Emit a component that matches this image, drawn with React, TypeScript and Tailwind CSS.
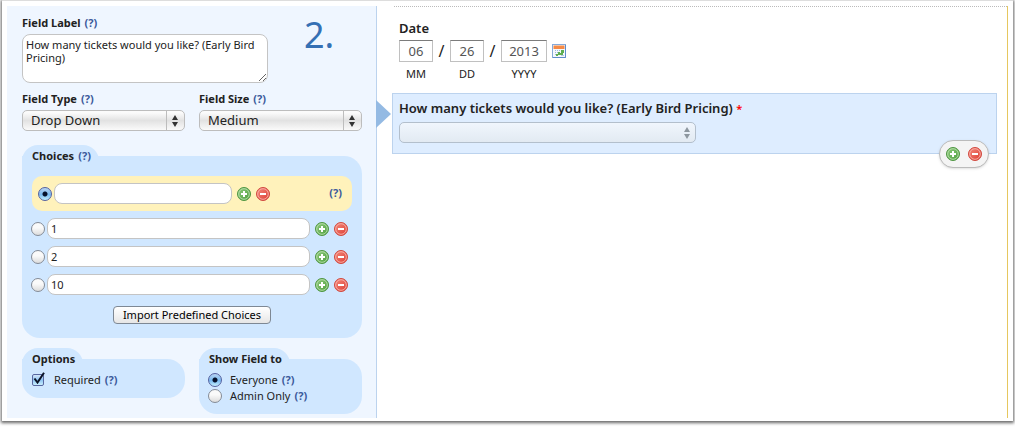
import { useState } from 'react';
import type { ReactNode } from 'react';

const choices = [
  { id: 'choice-1', value: '1' },
  { id: 'choice-2', value: '2' },
  { id: 'choice-10', value: '10' },
];

const dateParts = [
  { id: 'month', value: '06', hint: 'MM', width: 'w-[34px]' },
  { id: 'day', value: '26', hint: 'DD', width: 'w-[34px]' },
  { id: 'year', value: '2013', hint: 'YYYY', width: 'w-[46px]' },
];

function Help() {
  return (
    <a href="#help" className="font-bold text-[#3b5a9b]">
      (?)
    </a>
  );
}

function AddIcon() {
  return (
    <svg width="14" height="14" viewBox="0 0 14 14" aria-hidden="true">
      <defs>
        <linearGradient id="addFill" x1="0" y1="0" x2="1" y2="1">
          <stop offset="0" stopColor="#92cb80" />
          <stop offset="1" stopColor="#4b9e3a" />
        </linearGradient>
      </defs>
      <circle cx="7" cy="7" r="6.5" fill="url(#addFill)" stroke="#4f9642" />
      <circle cx="7" cy="7" r="5.3" fill="none" stroke="#b9dfae" strokeWidth="0.9" />
      <path d="M6 4h2v2h2v2H8v2H6V8H4V6h2z" fill="#fff" />
    </svg>
  );
}

function RemoveIcon() {
  return (
    <svg width="14" height="14" viewBox="0 0 14 14" aria-hidden="true">
      <defs>
        <linearGradient id="removeFill" x1="0" y1="0" x2="1" y2="1">
          <stop offset="0" stopColor="#f58d80" />
          <stop offset="1" stopColor="#dc3a30" />
        </linearGradient>
      </defs>
      <circle cx="7" cy="7" r="6.5" fill="url(#removeFill)" stroke="#d0493f" />
      <circle cx="7" cy="7" r="5.3" fill="none" stroke="#f8b3aa" strokeWidth="0.9" />
      <path d="M4 6h6v2H4z" fill="#fff" />
    </svg>
  );
}

function CalendarIcon() {
  return (
    <svg width="14" height="14" viewBox="0 0 14 14" aria-hidden="true">
      <rect x="0.5" y="0.5" width="13" height="13" fill="#f4f8fd" stroke="#86a9d8" />
      <path d="M13.5 1v12.5H1" fill="none" stroke="#5f8ccc" />
      <rect x="1.5" y="1.5" width="11" height="3.5" fill="#f58a45" />
      <path d="M3 6h1v1H3zM5 6h1v1H5zM7 6h1v1H7zM3 8h1v1H3zM3 10h1v1H3zM5 8h1v1H5z" fill="#9db8dc" />
      <path d="M9 6h3v3H9zM6 8h2v1h1v1H8v1H6v1H4v-2h2zM8 9h3v2H8z" fill="#5fae52" />
      <path d="M9 11h3v1H9z" fill="#b5c8e2" />
    </svg>
  );
}

function Arrows({ className }: { className: string }) {
  return (
    <svg
      width="6"
      height="12"
      viewBox="0 0 6 12"
      aria-hidden="true"
      className={`pointer-events-none absolute ${className}`}
    >
      <path d="M3 0l3 5H0zM3 12L0 7h6z" fill="currentColor" />
    </svg>
  );
}

function AddRemove({ className = 'gap-[5px]' }: { className?: string }) {
  return (
    <div className={`flex ${className}`}>
      <button type="button" aria-label="Add">
        <AddIcon />
      </button>
      <button type="button" aria-label="Remove">
        <RemoveIcon />
      </button>
    </div>
  );
}

type RadioProps = {
  id?: string;
  name: string;
  label?: string;
  checked: boolean;
  onChange: () => void;
};

function Radio({ id, name, label, checked, onChange }: RadioProps) {
  return (
    <input
      type="radio"
      id={id}
      name={name}
      aria-label={label}
      checked={checked}
      onChange={onChange}
      className="h-[14px] w-[14px] shrink-0 appearance-none rounded-full border border-[#848b96] bg-linear-to-b from-[#fafafa] from-40% to-[#dcdcdc] checked:border-[#5561a0] checked:bg-[radial-gradient(circle_at_50%_50%,#06112b_0_2px,transparent_3px),linear-gradient(#b9d4f3,#78b9f0_55%,#c4f0ff)]"
    />
  );
}

function Select({ id, label, value }: { id: string; label: string; value: string }) {
  return (
    <div className="flex flex-1 flex-col">
      <div className="mb-1 flex gap-1 leading-[14px]">
        <label htmlFor={id} className="font-bold">
          {label}
        </label>
        <Help />
      </div>
      <div className="relative">
        <select
          id={id}
          className="block h-[21px] w-full appearance-none rounded-[5px] border border-[#bdbdbd] bg-linear-to-b from-[#fbfbfb] from-10% via-[#e2e2e2] to-[#fafafa] pr-6 pl-2 text-[13px] leading-[19px] text-[#222]"
        >
          <option>{value}</option>
        </select>
        <span className="pointer-events-none absolute inset-y-px right-[18px] w-px bg-[#bdbdbd]" />
        <Arrows className="top-[5px] right-[7px] text-[#333]" />
      </div>
    </div>
  );
}

function Group({ title, className, children }: { title: ReactNode; className: string; children: ReactNode }) {
  return (
    <section>
      <h3 className="-mb-[11px] flex h-[22px] w-fit gap-1 rounded-t-2xl bg-[#d0e7ff] pr-2 pl-[10px] font-bold leading-[22px]">
        {title}
      </h3>
      <div className={`rounded-[18px] rounded-tl-none bg-[#d0e7ff] ${className}`}>{children}</div>
    </section>
  );
}

function FieldSettings() {
  const [selected, setSelected] = useState('blank');
  const [showTo, setShowTo] = useState('everyone');

  return (
    <form className="w-[370px] shrink-0 border-r border-[#bcd3ee] bg-[#eff6ff] pt-[10px] pr-[14px] pb-1 pl-[15px]">
      <div className="flex">
        <div className="w-[246px]">
          <div className="mb-1 flex gap-1 leading-[14px]">
            <label htmlFor="field-label" className="font-bold">
              Field Label
            </label>
            <Help />
          </div>
          <textarea
            id="field-label"
            defaultValue="How many tickets would you like? (Early Bird Pricing)"
            className="block h-[49px] w-full rounded-lg border border-[#c4c4c4] bg-white px-[3px] py-[3px] leading-[13px]"
          />
        </div>
        <div className="flex-1 pr-1 pl-9 text-[36px] leading-[38px] text-[#3570b4]">2.</div>
      </div>

      <div className="mt-[9px] flex gap-[14px]">
        <Select id="field-type" label="Field Type" value="Drop Down" />
        <Select id="field-size" label="Field Size" value="Medium" />
      </div>

      <div className="mt-[14px]">
        <Group
          title={
            <>
              Choices <Help />
            </>
          }
          className="px-[10px] pt-5 pb-[14px]"
        >
          <div className="flex h-[35px] items-center rounded-[10px] bg-[#fff2bb] pr-[10px] pl-[6px]">
            <Radio name="choice" label="Blank choice" checked={selected === 'blank'} onChange={() => setSelected('blank')} />
            <input
              type="text"
              aria-label="Blank choice text"
              className="mr-[5px] ml-[2px] h-[21px] w-[178px] rounded-lg border border-[#c4c4c4] bg-white px-1"
            />
            <AddRemove />
            <span className="ml-auto">
              <Help />
            </span>
          </div>

          <div className="-ml-px mt-[7px] flex flex-col gap-[7px] pr-1">
            {choices.map((choice) => (
              <div key={choice.id} className="flex items-center">
                <Radio
                  name="choice"
                  label={`Select ${choice.value}`}
                  checked={selected === choice.id}
                  onChange={() => setSelected(choice.id)}
                />
                <input
                  type="text"
                  aria-label={`Choice ${choice.value}`}
                  defaultValue={choice.value}
                  className="mr-[5px] ml-[2px] h-[21px] min-w-0 flex-1 rounded-lg border border-[#c4c4c4] bg-white px-[3px]"
                />
                <AddRemove />
              </div>
            ))}
          </div>

          <button
            type="button"
            className="mx-auto mt-[11px] block h-[18px] rounded-[4px] border border-[#7e8894] bg-linear-to-b from-white via-[#f3f3f3] to-[#e6e6e6] px-[9px] leading-[16px] text-black"
          >
            Import Predefined Choices
          </button>
        </Group>
      </div>

      <div className="mt-[10px] grid grid-cols-2 items-start gap-[14px]">
        <Group title="Options" className="px-[10px] pt-[13px] pb-[10px]">
          <div className="flex h-4 items-center gap-1">
            <span className="relative mr-[6px] h-3 w-3">
              <input
                type="checkbox"
                id="required"
                defaultChecked
                className="peer block h-3 w-3 appearance-none rounded-[2px] border border-[#5867a0] bg-linear-to-b from-[#d4e6fa] via-[#8fc4f2] to-[#c8efff]"
              />
              <svg
                width="12"
                height="12"
                viewBox="0 0 12 12"
                aria-hidden="true"
                className="pointer-events-none absolute -top-[2px] left-[1px] hidden peer-checked:block"
              >
                <path d="M1.5 6.5l3 4L11 0.8" fill="none" stroke="#0b1326" strokeWidth="2" />
              </svg>
            </span>
            <label htmlFor="required">Required</label>
            <Help />
          </div>
        </Group>
        <Group title="Show Field to" className="px-[9px] pt-[13px] pb-[10px]">
          <div className="flex h-4 items-center gap-1">
            <Radio id="everyone" name="show-to" checked={showTo === 'everyone'} onChange={() => setShowTo('everyone')} />
            <label htmlFor="everyone" className="ml-1">
              Everyone
            </label>
            <Help />
          </div>
          <div className="flex h-4 items-center gap-1">
            <Radio id="admin" name="show-to" checked={showTo === 'admin'} onChange={() => setShowTo('admin')} />
            <label htmlFor="admin" className="ml-1">
              Admin Only
            </label>
            <Help />
          </div>
        </Group>
      </div>
    </form>
  );
}

function FormPreview() {
  return (
    <main className="min-w-0 flex-1 border-r border-[#e6c75f] pl-[15px] text-[#222]">
      <div className="ml-[2px] border-t border-dotted border-[#bbb]" />

      <fieldset className="px-[7px] pt-[13px]">
        <legend className="float-left mb-1 w-full text-[13px] font-semibold leading-4">Date</legend>
        <div className="clear-both flex items-start">
          {dateParts.map((part, i) => (
            <div key={part.id} className="flex">
              {i > 0 && <span className="w-[17px] text-center text-base leading-[22px]">/</span>}
              <div className="flex flex-col items-center">
                <input
                  type="text"
                  id={part.id}
                  defaultValue={part.value}
                  className={`h-[22px] border border-[#c0c0c0] border-t-[#7c7c7c] bg-white text-center text-[13px] text-[#555] ${part.width}`}
                />
                <label htmlFor={part.id} className="mt-[5px] leading-[14px]">
                  {part.hint}
                </label>
              </div>
            </div>
          ))}
          <button type="button" aria-label="Pick a date" className="mt-1 ml-[5px]">
            <CalendarIcon />
          </button>
        </div>
      </fieldset>

      <section className="relative mt-3 mr-[10px] border border-[#bcd3ee] bg-[#deedff] px-[6px] pt-[6px] pb-[10px]">
        <svg
          width="15"
          height="28"
          viewBox="0 0 15 28"
          aria-hidden="true"
          className="absolute top-[6px] -left-[17px]"
        >
          <path d="M0 0l15 14L0 28z" fill="#94bae3" />
        </svg>
        <label htmlFor="tickets" className="mb-[5px] block text-[13px] font-semibold leading-4">
          How many tickets would you like? (Early Bird Pricing) <span className="text-[11px] text-[#f00]">*</span>
        </label>
        <div className="relative w-[297px] max-w-full">
          <select
            id="tickets"
            className="block h-[21px] w-full appearance-none rounded-[5px] border border-[#b3bfcc] bg-linear-to-b from-[#f0f6fd] to-[#e2eaf2] px-2 text-[13px]"
          >
            <option value=""></option>
          </select>
          <Arrows className="top-[5px] right-[6px] text-[#8d979f]" />
        </div>
        <div className="absolute right-[7px] -bottom-[15px] rounded-[14px] border border-[#bbb] bg-[#f4f4f4] px-[6px] py-[6px] shadow-sm">
          <AddRemove className="gap-2" />
        </div>
      </section>
    </main>
  );
}

export default function App() {
  return (
    <div className="bg-white px-[2px] pb-[6px] font-['Noto_Sans','Open_Sans',sans-serif] text-[11px] text-[#222]">
      <div className="flex border-t border-[#ddd] bg-white px-[5px] pt-[5px] pb-[3px] shadow-[0_1px_3px_1px_rgba(0,0,0,0.6)]">
        <FieldSettings />
        <FormPreview />
      </div>
    </div>
  );
}
